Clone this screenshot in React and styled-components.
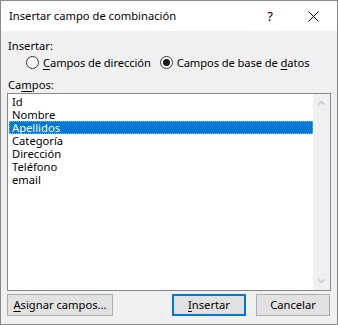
import React from 'react'
import styled, { createGlobalStyle } from 'styled-components'

const GlobalStyle = createGlobalStyle`
  html, body {
    margin: 0;
    padding: 0;
    background: #ffffff;
  }
  body {
    font-family: 'Segoe UI', 'Noto Sans', 'Liberation Sans', sans-serif;
    font-size: 11.2px;
    color: #000;
  }
`

const Window = styled.div`
  box-sizing: border-box;
  width: 338px;
  height: 325px;
  border: 1px solid #8a8a8a;
  display: flex;
  flex-direction: column;
  background: #f0f0f0;
  white-space: nowrap;
`

const TitleBar = styled.div`
  height: 30px;
  background: #fff;
  display: flex;
  align-items: center;
  padding-left: 8px;
  flex-shrink: 0;
`

const Title = styled.span`
  flex: 1;
  font-size: 11.2px;
  margin-top: -2px;
`

const TitleButton = styled.span`
  width: 20px;
  margin: ${(p) => p.m || 0};
  display: flex;
  justify-content: center;
  align-items: center;
  font-size: 13px;
  color: #000;
`

const Body = styled.div`
  flex: 1;
  display: flex;
  flex-direction: column;
  padding: 7px 6px 0 6px;
`

const Label = styled.div`
  height: 15px;
  line-height: 15px;
  padding-left: 1px;
`

const RadioRow = styled.div`
  display: flex;
  align-items: center;
  height: 15px;
  margin: 2px 0 7px 19px;
  gap: 9px;
  letter-spacing: -0.1px;
`

const RadioOption = styled.label`
  display: flex;
  align-items: center;
  gap: 4px;
`

const RadioCircle = styled.span`
  box-sizing: border-box;
  width: 13px;
  height: 13px;
  border-radius: 50%;
  border: 1px solid #333;
  background: #fff;
  display: flex;
  align-items: center;
  justify-content: center;

  &::after {
    content: '';
    width: 7px;
    height: 7px;
    border-radius: 50%;
    background: ${(p) => (p.checked ? '#1a1a1a' : 'transparent')};
  }
`

const U = styled.span`
  text-decoration: underline;
  text-underline-offset: 2px;
`

const ListBox = styled.div`
  box-sizing: border-box;
  margin-top: 1px;
  height: 198px;
  border: 1px solid #828790;
  background: #fff;
  display: flex;
`

const Items = styled.div`
  flex: 1;
  padding: 1px 0 0 1px;
`

const Item = styled.div`
  box-sizing: border-box;
  height: 13px;
  line-height: 13px;
  padding-left: 3px;
  background: ${(p) => (p.selected ? '#0078d7' : 'transparent')};
  color: ${(p) => (p.selected ? '#fff' : '#000')};
  outline: ${(p) => (p.selected ? '1px dotted #7fbbeb' : 'none')};
  outline-offset: -1px;
`

const ScrollBar = styled.div`
  width: 17px;
  background: #f0f0f0;
  display: flex;
  flex-direction: column;
  justify-content: space-between;
  align-items: center;
  padding: 6px 0;
`

const Buttons = styled.div`
  display: flex;
  align-items: center;
  margin-top: 3px;
`

const Button = styled.button`
  box-sizing: border-box;
  width: ${(p) => p.w}px;
  height: 22px;
  margin-left: ${(p) => p.ml || 0}px;
  background: #e1e1e1;
  border: ${(p) => (p.primary ? '2px solid #0078d7' : '1px solid #adadad')};
  font-family: inherit;
  font-size: 11.2px;
  color: #000;
  padding: 0;
  line-height: 18px;
`

const Chevron = ({ up }) => (
  <svg width="9" height="6" viewBox="0 0 9 6">
    <path
      d={up ? 'M1 5 L4.5 1.5 L8 5' : 'M1 1 L4.5 4.5 L8 1'}
      fill="none"
      stroke="#c8c8c8"
      strokeWidth="1.5"
    />
  </svg>
)

const fields = ['Id', 'Nombre', 'Apellidos', 'Categoría', 'Dirección', 'Teléfono', 'email']

export default function App() {
  return (
    <>
      <GlobalStyle />
      <Window>
        <TitleBar>
          <Title>Insertar campo de combinación</Title>
          <TitleButton>?</TitleButton>
          <TitleButton m="0 14px 0 23px">
            <svg width="11" height="11" viewBox="0 0 11 11">
              <path d="M0.5 0.5 L10.5 10.5 M10.5 0.5 L0.5 10.5" stroke="#000" strokeWidth="1" />
            </svg>
          </TitleButton>
        </TitleBar>
        <Body>
          <Label>Insertar:</Label>
          <RadioRow>
            <RadioOption>
              <RadioCircle />
              <span>
                <U>C</U>ampos de dirección
              </span>
            </RadioOption>
            <RadioOption>
              <RadioCircle checked />
              <span>
                Campos de base de <U>d</U>atos
              </span>
            </RadioOption>
          </RadioRow>
          <Label>
            Ca<U>m</U>pos:
          </Label>
          <ListBox>
            <Items>
              {fields.map((f) => (
                <Item key={f} selected={f === 'Apellidos'}>
                  {f}
                </Item>
              ))}
            </Items>
            <ScrollBar>
              <Chevron up />
              <Chevron />
            </ScrollBar>
          </ListBox>
          <Buttons>
            <Button w={106}>
              <U>A</U>signar campos...
            </Button>
            <Button w={74} ml={59} primary>
              <U>I</U>nsertar
            </Button>
            <Button w={74} ml={10}>
              Cancelar
            </Button>
          </Buttons>
        </Body>
      </Window>
    </>
  )
}
